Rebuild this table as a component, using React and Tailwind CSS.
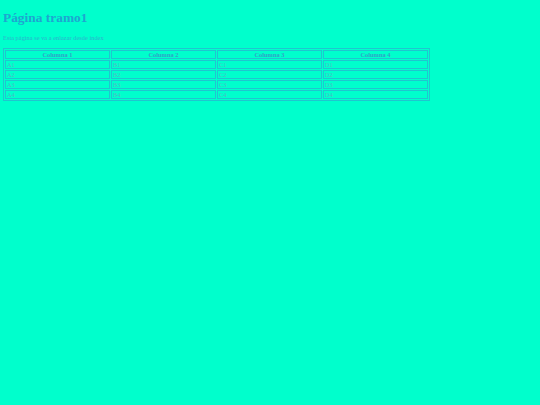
import React from "react";

const rows = [
  ["A1", "B1", "C1", "D1"],
  ["A2", "B2", "C2", "D2"],
  ["A3", "B3", "C3", "D3"],
  ["A4", "B4", "C4", "D4"],
];

const App = () => {
  return (
    <div className="min-h-screen bg-[#00ffcc] px-[3px] pt-[10px] font-['Liberation_Serif',serif]">
      <h1 className="text-[13.4px] leading-[15px] font-bold text-[#1ea6d0]">Página tramo1</h1>

      <p className="mt-[9px] text-[6.4px] leading-[8px] text-[#2eb4cc]">
        Esta página se va a enlazar desde index
      </p>

      <table className="mt-[6px] w-[427px] table-fixed border-separate border-spacing-[1px] border border-[#1fc6cf] text-[6.4px] leading-[7px]">
        <thead>
          <tr>
            {["Columna 1", "Columna 2", "Columna 3", "Columna 4"].map((h) => (
              <th key={h} className="h-[9px] border border-[#1fc6cf] p-0 font-bold text-[#34a2c6]">
                {h}
              </th>
            ))}
          </tr>
        </thead>
        <tbody>
          {rows.map((row) => (
            <tr key={row[0]}>
              {row.map((cell) => (
                <td key={cell} className="h-[9px] border border-[#1fc6cf] p-0 pl-[1px] text-left text-[#4cbcc4]">
                  {cell}
                </td>
              ))}
            </tr>
          ))}
        </tbody>
      </table>
    </div>
  );
};

export default App;
